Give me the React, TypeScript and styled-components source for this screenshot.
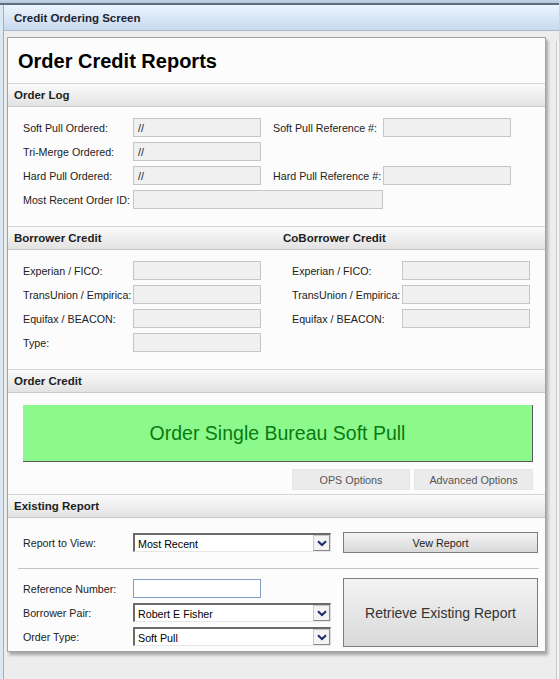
import styled, { createGlobalStyle } from 'styled-components'

const GlobalStyle = createGlobalStyle`
  html, body {
    margin: 0;
    padding: 0;
    background: #ededed;
  }
  * {
    box-sizing: border-box;
  }
`

const Screen = styled.div`
  width: 559px;
  height: 679px;
  display: flex;
  flex-direction: column;
  overflow: hidden;
  background: #ededed;
  font-family: 'Liberation Sans', Arial, sans-serif;
  font-size: 10.7px;
  color: #222;
`

const TopStrip = styled.div`
  height: 5px;
  flex-shrink: 0;
  background: linear-gradient(#c6d5e8, #b3c4da);
  border-bottom: 2px solid #5f6f83;
`

const Window = styled.div`
  flex: 1;
  display: flex;
  min-height: 0;
`

const Rail = styled.div`
  width: 4px;
  flex-shrink: 0;
  background: #dce7f4;
  border-right: 1px solid #9fb0c6;
`

const Main = styled.div`
  flex: 1;
  display: flex;
  flex-direction: column;
  min-width: 0;
`

const TitleBar = styled.div`
  height: 26px;
  flex-shrink: 0;
  display: flex;
  align-items: center;
  padding: 1px 0 0 10px;
  font-size: 11.5px;
  font-weight: bold;
  color: #1c2430;
  background: linear-gradient(#ecf4fd, #c8daf0);
  border-bottom: 1px solid #a9b8cb;
`

const Viewport = styled.div`
  flex: 1;
  display: flex;
  align-items: flex-start;
  padding: 6px 0 0 3px;
  min-height: 0;
`

const ScrollEdge = styled.div`
  align-self: stretch;
  margin-left: auto;
  width: 3px;
  margin-top: 4px;
  background: #f6f6f6;
  border-left: 1px solid #c9c9c9;
`

const Panel = styled.div`
  width: 539px;
  background: #fcfcfc;
  border: 1px solid #a3a3a3;
  box-shadow: 2px 3px 3px rgba(0, 0, 0, 0.3);
  display: flex;
  flex-direction: column;
`

const PageTitle = styled.h1`
  margin: 0;
  height: 45px;
  display: flex;
  align-items: center;
  padding: 1px 0 0 10px;
  font-size: 20px;
  font-weight: bold;
  color: #000;
`

const SectionHeader = styled.div`
  height: 24px;
  display: flex;
  align-items: center;
  padding-left: 6px;
  font-size: 11.5px;
  font-weight: bold;
  color: #1e1e1e;
  background: linear-gradient(#fbfbfb, #e2e2e2);
  border-top: 1px solid #d6d6d6;
  border-bottom: 1px solid #c9c9c9;
`

const SectionBody = styled.div<{ $top: number; $bottom: number }>`
  padding: ${({ $top }) => $top}px 14px ${({ $bottom }) => $bottom}px 15px;
`

const FormGrid = styled.div<{ $columns: string }>`
  display: grid;
  grid-template-columns: ${({ $columns }) => $columns};
  grid-auto-rows: 19px;
  row-gap: 5px;
  align-items: center;
`

const Label = styled.div<{ $col?: number }>`
  grid-column: ${({ $col }) => ($col ? `${$col}` : 'auto')};
  white-space: nowrap;
  color: #222;
  padding-top: 1px;
`

const ReadOnlyField = styled.div<{ $span?: string }>`
  grid-column: ${({ $span }) => $span ?? 'auto'};
  height: 19px;
  padding: 3px 4px 0;
  background: #f0f0f0;
  border: 1px solid #c6c6c6;
  color: #222;
`

const TwoColumns = styled.div`
  display: grid;
  grid-template-columns: 269px 268px;
`

const GreenButton = styled.button`
  display: block;
  width: 510px;
  height: 57px;
  margin: 0;
  padding: 0;
  background: #8cf98c;
  border: none;
  border-right: 1px solid #5a5a5a;
  border-bottom: 1px solid #5a5a5a;
  font-family: inherit;
  font-size: 19.5px;
  color: #0a7a12;
  cursor: pointer;
`

const OptionRow = styled.div`
  width: 510px;
  display: flex;
  justify-content: flex-end;
  gap: 4px;
  margin-top: 7px;
`

const OptionButton = styled.button<{ $w: number }>`
  width: ${({ $w }) => $w}px;
  height: 21px;
  padding: 0;
  background: #ebebeb;
  border: 1px solid #e6e6e6;
  font-family: inherit;
  font-size: 10.8px;
  color: #555;
`

const ReportGrid = styled.div<{ $rows?: number }>`
  display: grid;
  grid-template-columns: 110px 198px 12px 195px;
  grid-template-rows: ${({ $rows }) => ($rows ? `repeat(${$rows}, 19px)` : '21px')};
  row-gap: 5px;
  align-items: center;
`

const Separator = styled.div`
  height: 1px;
  width: 521px;
  margin: 15px 0 10px -5px;
  background: #c4c4c4;
`

const SelectBox = styled.div`
  position: relative;
  height: 19px;
  display: flex;
  align-items: center;
  padding: 1px 0 0 3px;
  grid-column: 2;
  background: #fff;
  border-top: 2px solid #6a6a6a;
  border-left: 2px solid #6a6a6a;
  border-right: 1px solid #dcdcdc;
  border-bottom: 1px solid #e6e6e6;
  color: #000;
`

const ArrowBox = styled.span`
  position: absolute;
  right: 0;
  top: 0;
  width: 17px;
  height: 16px;
  display: flex;
  align-items: center;
  justify-content: center;
  background: #f3f3f3;
  border: 1px solid #8a8a8a;
  border-top-color: #c8c8c8;
  border-left-color: #c8c8c8;
`

const TextInput = styled.input`
  grid-column: 2;
  width: 128px;
  height: 19px;
  margin: 0;
  padding: 0 4px;
  background: #fff;
  border: 1px solid #7f9fc0;
  font-family: inherit;
  font-size: 11px;
`

const GrayButton = styled.button<{ $big?: boolean }>`
  width: 195px;
  height: ${({ $big }) => ($big ? '69px' : '21px')};
  grid-row: ${({ $big }) => ($big ? '1 / span 3' : '1')};
  grid-column: 4;
  margin: 0;
  padding: 0;
  background: linear-gradient(#f3f3f3, #d9d9d9);
  border: 1px solid #7d7d7d;
  font-family: inherit;
  font-size: ${({ $big }) => ($big ? '14px' : '10.8px')};
  color: ${({ $big }) => ($big ? '#333' : '#222')};
  align-self: start;
  margin-top: ${({ $big }) => ($big ? '-1px' : '0')};
`

function Select({ value }: { value: string }) {
  return (
    <SelectBox>
      {value}
      <ArrowBox>
        <svg width="10" height="7" viewBox="0 0 10 7">
          <path d="M1 1.2 L5 5 L9 1.2" fill="none" stroke="#1b2b6b" strokeWidth="2" />
        </svg>
      </ArrowBox>
    </SelectBox>
  )
}

function CreditColumn({ title, rows }: { title: string; rows: string[] }) {
  return (
    <div>
      <SectionHeader>{title}</SectionHeader>
      <SectionBody $top={11} $bottom={17}>
        <FormGrid $columns="110px 128px">
          {rows.map((r) => [<Label key={r + 'l'}>{r}</Label>, <ReadOnlyField key={r + 'f'} />])}
          {Array.from({ length: 4 - rows.length }).map((_, i) => (
            <div key={'pad' + i} style={{ height: 19 }} />
          ))}
        </FormGrid>
      </SectionBody>
    </div>
  )
}

export default function App() {
  return (
    <>
      <GlobalStyle />
      <Screen>
        <TopStrip />
        <Window>
          <Rail />
          <Main>
            <TitleBar>Credit Ordering Screen</TitleBar>
            <Viewport>
              <Panel>
                <PageTitle>Order Credit Reports</PageTitle>

                <SectionHeader>Order Log</SectionHeader>
                <SectionBody $top={11} $bottom={17}>
                  <FormGrid $columns="110px 128px 12px 110px 128px">
                    <Label>Soft Pull Ordered:</Label>
                    <ReadOnlyField>//</ReadOnlyField>
                    <Label $col={4}>Soft Pull Reference #:</Label>
                    <ReadOnlyField />

                    <Label>Tri-Merge Ordered:</Label>
                    <ReadOnlyField>//</ReadOnlyField>
                    <div />
                    <div />
                    <div />

                    <Label>Hard Pull Ordered:</Label>
                    <ReadOnlyField>//</ReadOnlyField>
                    <Label $col={4}>Hard Pull Reference #:</Label>
                    <ReadOnlyField />

                    <Label>Most Recent Order ID:</Label>
                    <ReadOnlyField $span="2 / span 3" />
                  </FormGrid>
                </SectionBody>

                <TwoColumns>
                  <CreditColumn
                    title="Borrower Credit"
                    rows={['Experian / FICO:', 'TransUnion / Empirica:', 'Equifax / BEACON:', 'Type:']}
                  />
                  <CreditColumn
                    title="CoBorrower Credit"
                    rows={['Experian / FICO:', 'TransUnion / Empirica:', 'Equifax / BEACON:']}
                  />
                </TwoColumns>

                <SectionHeader>Order Credit</SectionHeader>
                <SectionBody $top={12} $bottom={4}>
                  <GreenButton>Order Single Bureau Soft Pull</GreenButton>
                  <OptionRow>
                    <OptionButton $w={118}>OPS Options</OptionButton>
                    <OptionButton $w={119}>Advanced Options</OptionButton>
                  </OptionRow>
                </SectionBody>

                <SectionHeader>Existing Report</SectionHeader>
                <SectionBody $top={14} $bottom={5}>
                  <ReportGrid>
                    <Label $col={1}>Report to View:</Label>
                    <Select value="Most Recent" />
                    <GrayButton>Vew Report</GrayButton>
                  </ReportGrid>
                  <Separator />
                  <ReportGrid $rows={3}>
                    <Label $col={1}>Reference Number:</Label>
                    <TextInput />
                    <GrayButton $big>Retrieve Existing Report</GrayButton>
                    <Label $col={1}>Borrower Pair:</Label>
                    <Select value="Robert E Fisher" />
                    <Label $col={1}>Order Type:</Label>
                    <Select value="Soft Pull" />
                  </ReportGrid>
                </SectionBody>
              </Panel>
              <ScrollEdge />
            </Viewport>
          </Main>
        </Window>
      </Screen>
    </>
  )
}
